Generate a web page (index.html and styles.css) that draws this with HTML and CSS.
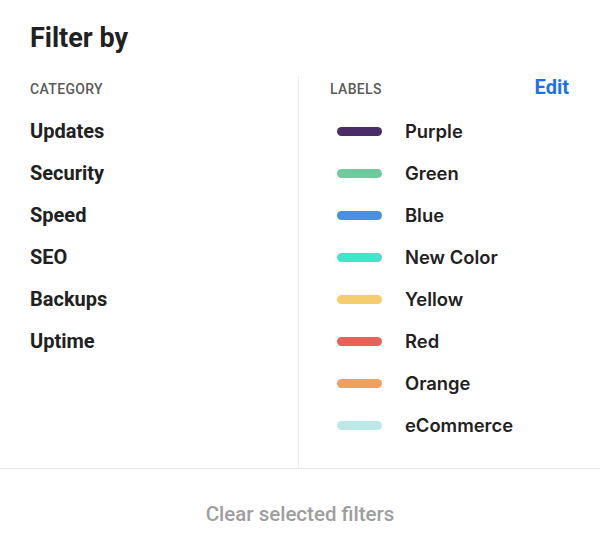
FILE: index.html
```html
<!DOCTYPE html>
<html lang="en">
<head>
<meta charset="utf-8">
<title>Filter by</title>
<link rel="stylesheet" href="styles.css">
</head>
<body>
<div class="panel">
  <h2 class="title">Filter by</h2>
  <div class="columns">
    <div class="col col-left">
      <div class="col-head"><span class="heading">CATEGORY</span></div>
      <ul class="list">
        <li class="item">Updates</li>
        <li class="item">Security</li>
        <li class="item">Speed</li>
        <li class="item">SEO</li>
        <li class="item">Backups</li>
        <li class="item">Uptime</li>
      </ul>
    </div>
    <div class="col col-right">
      <div class="col-head"><span class="heading">LABELS</span><a class="edit" href="#">Edit</a></div>
      <ul class="list">
        <li class="item label"><span class="swatch purple"></span><span class="label-text">Purple</span></li>
        <li class="item label"><span class="swatch green"></span><span class="label-text">Green</span></li>
        <li class="item label"><span class="swatch blue"></span><span class="label-text">Blue</span></li>
        <li class="item label"><span class="swatch newcolor"></span><span class="label-text">New Color</span></li>
        <li class="item label"><span class="swatch yellow"></span><span class="label-text">Yellow</span></li>
        <li class="item label"><span class="swatch red"></span><span class="label-text">Red</span></li>
        <li class="item label"><span class="swatch orange"></span><span class="label-text">Orange</span></li>
        <li class="item label"><span class="swatch ecommerce"></span><span class="label-text">eCommerce</span></li>
      </ul>
    </div>
  </div>
  <div class="footer"><span class="clear">Clear selected filters</span></div>
</div>
</body>
</html>
```
FILE: styles.css
```css
* { box-sizing: border-box; }
html, body { margin: 0; padding: 0; background: #fff; }
body {
  font-family: Roboto, "Liberation Sans", Arial, sans-serif;
  color: #212121;
  width: 600px;
  height: 548px;
  overflow: hidden;
}
.panel { width: 600px; }
.title {
  margin: 0;
  padding: 23px 30px 0;
  font-size: 27px;
  line-height: 30px;
  font-weight: 700;
  color: #212121;
}
.columns {
  margin-top: 23px;
  display: grid;
  grid-template-columns: 299px 1fr;
  border-bottom: 1px solid #e8e8e8;
}
.col { padding: 5px 0 22px; }
.col-left { padding-left: 30px; border-right: 1px solid #ececec; }
.col-right { padding-left: 31px; padding-right: 31px; }
.col-head {
  display: flex;
  justify-content: space-between;
  align-items: flex-end;
  height: 16px;
  margin-bottom: 13px;
}
.heading {
  font-size: 14px;
  line-height: 16px;
  font-weight: 500;
  color: #5a5a5a;
  letter-spacing: 0.35px;
}
.edit {
  font-size: 20px;
  line-height: 22px;
  font-weight: 700;
  color: #1a73e8;
  text-decoration: none;
  margin-bottom: -1px;
}
.list { list-style: none; margin: 0; padding: 0; }
.item {
  height: 42px;
  line-height: 42px;
  font-size: 20px;
  font-weight: 700;
  color: #212121;
}
.label { display: flex; align-items: center; }
.swatch {
  display: block;
  width: 45px;
  height: 9px;
  border-radius: 5px;
  margin-left: 7px;
  margin-right: 23px;
}
.label-text { font-family: Inter, Roboto, sans-serif; font-size: 18.4px; font-weight: 600; }
.purple { background: #4a2d66; }
.green { background: #6fcb9c; }
.blue { background: #4a8ee6; }
.newcolor { background: #3ee7c9; }
.yellow { background: #f4cd6c; }
.red { background: #e8625a; }
.orange { background: #efa15c; }
.ecommerce { background: #bce9e7; }
.footer {
  padding: 34px 0 0;
  text-align: center;
}
.clear {
  font-size: 20.5px;
  line-height: 22px;
  font-weight: 500;
  color: #9e9e9e;
}
```
